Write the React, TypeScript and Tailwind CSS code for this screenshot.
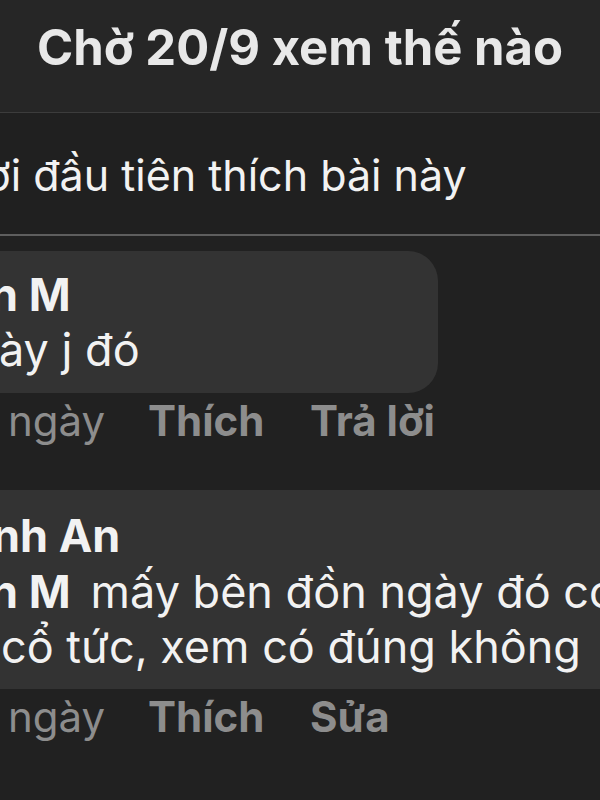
const font = { fontFamily: "Inter, 'Noto Sans', sans-serif" };

function Actions({ last }: { last: string }) {
  return (
    <div className="flex items-baseline h-[56px] pl-[8px] text-[42px] leading-[56px] text-[#8d8d8d] whitespace-nowrap">
      <span className="w-[140px]">ngày</span>
      <span className="w-[162px] font-bold">Thích</span>
      <span className="font-bold">{last}</span>
    </div>
  );
}

export default function App() {
  return (
    <div className="w-[600px] h-[800px] overflow-hidden bg-[#212121] text-[#f2f2f2]" style={font}>
      <div className="h-[112px] bg-[#262626] flex justify-center pt-[20px]">
        <h1 className="text-[49px] leading-[56px] font-bold text-[#e8e8e8]">Chờ 20/9 xem thế nào</h1>
      </div>
      <div className="h-px bg-[#3c3c3c]" />
      <div className="h-[121px] bg-[#202020] pt-[34px] overflow-hidden whitespace-nowrap">
        <p className="-ml-[15px] text-[43px] leading-[56px]">ời đầu tiên thích bài này</p>
      </div>
      <div className="h-[2px] bg-[#5e5e5e]" />

      <div className="pt-[15px] overflow-hidden">
        <div className="-ml-[40px] w-[478px] h-[142px] rounded-[30px] bg-[#333333] pt-[16px] whitespace-nowrap overflow-hidden">
          <p className="ml-[30px] text-[45px] leading-[56px] font-bold">n M</p>
          <p className="ml-[39px] text-[45px] leading-[54px]">ày j đó</p>
        </div>
        <Actions last="Trả lời" />

        <div className="mt-[41px] -ml-[40px] w-[700px] h-[199px] bg-[#333333] pt-[18px] whitespace-nowrap overflow-hidden">
          <p className="ml-[32px] text-[45px] leading-[56px] font-bold">nh An</p>
          <p className="ml-[30px] text-[45px] leading-[55px]">
            <span className="font-bold">n M</span>
            <span className="ml-[20px]">mấy bên đồn ngày đó có</span>
          </p>
          <p className="ml-[41px] text-[45px] leading-[55px]">cổ tức, xem có đúng không</p>
        </div>
        <Actions last="Sửa" />
      </div>
    </div>
  );
}
